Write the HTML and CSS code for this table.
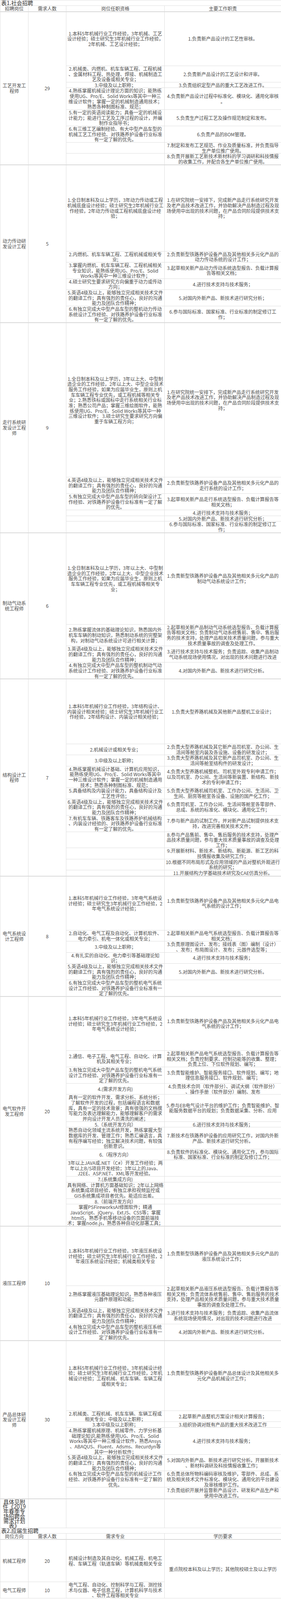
FILE: index.html
```html
<!DOCTYPE html>
<html lang="zh-CN">
<head>
<meta charset="utf-8">
<title>招聘需求</title>
<link rel="stylesheet" href="styles.css">
</head>
<body>
<table class="recruit">
<colgroup><col class="c1"><col class="c2"><col class="c3"><col class="c4"></colgroup>
<tbody>
<tr><td class="caption" colspan="4">表1.社会招聘</td></tr>
<tr class="head"><th>招聘岗位</th><th>需求人数</th><th>岗位任职资格</th><th>主要工作职责</th></tr>
</tbody>

<tbody class="group">
<tr class="gs"><td rowspan="8">工艺开发工<br>程师</td><td rowspan="8">29</td><td class="h-192">1.本科5年机械行业工作经验，3年机械、工艺<br>设计经验；硕士研究生3年机械行业工作经验，<br>2年机械、工艺设计经验；</td><td>1.负责新产品设计的工艺性审核。</td></tr>
<tr><td>2.机械类、内燃机、机车车辆工程、工程机械<br>、金属材料工程、热处理、焊接、机械制造工<br>艺及设备或相关专业；</td><td>2.负责新产品设计的工艺设计和评审。</td></tr>
<tr><td>3.中级及以上职称；</td><td>3.负责组织定型产品的重大工艺改进工作。</td></tr>
<tr><td>4.熟练掌握机械设计理论方面的知识；能熟练<br>使用UG、Pro/E、Solid Works等其中一种三<br>维设计软件；掌握一定的机械制造通用技术；<br>熟悉各种制图标准、规范；</td><td>4.负责新产品设计过程中标准化、模块化、通用化审核<br>。</td></tr>
<tr><td>5.有一定的英语阅读能力；具备一定的机械设<br>计能力；能进行工艺及工序过程的设计，并编<br>制作业指导书；</td><td>5.负责生产过程工艺及操作规范制定和发布。</td></tr>
<tr><td>6.有三维工艺编制经验、有大中型产品车型的<br>机械工艺工作经验、对铁路养护设备行业标准<br>有一定了解的优先。</td><td>6.负责产品的BOM管理。</td></tr>
<tr><td></td><td>7.制定和发布工艺规范、作业及质量标准，并负责指导<br>生产单位推广使用。</td></tr>
<tr><td></td><td>8.负责开展新工艺新技术新材料的学习调研和科技情报<br>的收集工作，并配合各生产单位推广使用。</td></tr>
</tbody>

<tbody class="group">
<tr class="gs"><td rowspan="6">动力传动研<br>发设计工程</td><td rowspan="6">5</td><td class="h-306">1.全日制本科及以上学历，3年动力传动或工程<br>机械底盘设计经验；硕士研究生2年机械行业工<br>作经验，2年动力传动或工程机械底盘设计经<br>验；</td><td>1.在研究院统一安排下，完成新产品走行系统研究开发<br>及老产品技术改进工作，并协助解决产品制造过程及现<br>场使用中出现的技术问题，在产品合同阶段提供技术支<br>持；</td></tr>
<tr><td>2.内燃机、机车车辆工程、工程机械或相关专<br>业;</td><td>2.负责新型铁路养护设备产品及其他相关多元化产品的<br>动力传动系统的设计工作；</td></tr>
<tr><td>3.掌握内燃机、机车车辆工程、工程机械相关<br>专业知识，能熟练使用UG、Pro/E、Solid<br>Works等其中一种三维设计软件；</td><td>3.起草相关新产品动力传动系统选型报告、负载计算报<br>告等相关文档；</td></tr>
<tr><td>4.硕士研究生要求研究方向偏重于动力或传动<br>方向；</td><td>4.进行技术支持与技术服务；</td></tr>
<tr><td>5.英语4级及以上，能够独立完成相关技术文件<br>的翻译工作；具有强烈的责任心，良好的沟通<br>能力及团队合作精神；</td><td>5.对国内外新产品、新技术进行研究分析；</td></tr>
<tr><td>6.有独立完成大中型产品车型的整机动力传动<br>系统设计工作经验、对铁路养护设备行业标准<br>有一定了解的优先。</td><td>6.参与国际标准、国家标准、行业标准的制定修订工<br>作；</td></tr>
</tbody>

<tbody class="group">
<tr class="gs"><td rowspan="6">走行系统研<br>发设计工程<br>师</td><td rowspan="6">9</td><td class="h-546">1.全日制本科及以上学历，3年以上大、中型制<br>造企业的工作经验，2年以上大、中型企业技术<br>服务工作经验，如果为应届毕业生，原则上机<br>车车辆工程专业优先，或工程机械等相关专<br>业；2.熟悉铁标或国标中走行系统相关行业标<br>准；熟悉公司产品；掌握三维绘图软件，能熟<br>练使用UG、Pro/E、Solid Works等其中一种<br>三维设计软件； 3.硕士研究生要求研究方向偏<br>重于车辆工程方向；</td><td>1.在研究院统一安排下，完成新产品走行系统研究开发<br>及老产品技术改进工作，并协助解决产品制造过程及现<br>场使用中出现的技术问题，在产品合同阶段提供技术支<br>持；</td></tr>
<tr><td>4.英语4级及以上，能够独立完成相关技术文件<br>的翻译工作；具有强烈的责任心，良好的沟通<br>能力及团队合作精神；</td><td>2.负责新型铁路养护设备产品及其他相关多元化产品的<br>走行系统的设计工作；</td></tr>
<tr><td>5.有独立完成大中型产品车型的转向架设计工<br>作经验、对铁路养护设备行业标准有一定了解<br>的优先。</td><td>3.起草相关新产品走行系统选型报告、负载计算报告等<br>相关文档；</td></tr>
<tr><td></td><td>4.进行技术支持与技术服务；</td></tr>
<tr><td></td><td>5.对国内外新产品、新技术进行研究分析；</td></tr>
<tr><td></td><td>6.参与国际标准、国家标准、行业标准的制定修订工<br>作；</td></tr>
</tbody>

<tbody class="group">
<tr class="gs"><td rowspan="4">制动气动系<br>统工程师</td><td rowspan="4">6</td><td class="h-324">1.全日制本科及以上学历，3年以上大、中型制<br>造企业的工作经验，2年以上大、中型企业技术<br>服务工作经验，如果为应届毕业生，原则上机<br>车车辆工程专业优先，或工程机械等相关专<br>业；</td><td>1.负责新型铁路养护设备产品及其他相关多元化产品的<br>制动气动系统设计工作；</td></tr>
<tr><td>2.熟练掌握流体的基础理论知识，熟悉国内外<br>机车车辆的制动知识，熟悉制动系统的完整架<br>构，对制动气动系统设计可进行相关计算；</td><td>2.起草相关新产品制动气动系统选型报告、负载计算报<br>告等相关文档；负责制动气动系统售前、售中、售后服<br>务的技术支持，处理产品相关技术质量问题，参与重大<br>技术质量事故的调查及处理工作。</td></tr>
<tr><td>3.英语4级及以上，能够独立完成相关技术文件<br>的翻译工作；具有强烈的责任心，良好的沟通<br>能力及团队合作精神；</td><td>3.进行技术支持与技术服务；负责追踪、收集产品制动<br>气动系统现场使用情况，对出现的技术问题进行改进</td></tr>
<tr><td>4.有独立完成大中型产品车型的整机制动气动<br>系统设计工作经验、对铁路养护设备行业标准<br>有一定了解的优先。</td><td>4.对国内外新产品、新技术进行研究分析。</td></tr>
</tbody>

<tbody class="group">
<tr class="gs"><td rowspan="11">结构设计工<br>程师</td><td rowspan="11">7</td><td class="h-230">1.本科5年机械行业工作经验，3年结构设计、<br>内装设计相关经验；硕士研究生3年机械行业工<br>作经验，2年结构设计、内装设计相关经验；</td><td>1.负责大型养路机械及其他新产品整机工业设计；</td></tr>
<tr><td>2.机械设计或相关专业；</td><td>2.负责大型养路机械及其它新产品司机室、办公间、生<br>活间等舱室内装及各设施、设备的研发设计；</td></tr>
<tr><td>3.中级及以上职称；</td><td>3.负责大型养路机械及其它新产品司机室、办公间、生<br>活间等舱室结构件的研发设计；</td></tr>
<tr><td>4.熟练掌握机械设计基础、计算机应用知识，<br>能熟练使用UG、Pro/E、Solid Works等其中<br>一种三维设计软件；掌握一定的机械制造通用<br>技术；熟悉各种制图标准、规范；</td><td>4.负责大型养路机械整机、司机室外观专利申请工作；<br>以及司机室、办公间、生活间等新装置、新结构、新技<br>术的专利申请工作；</td></tr>
<tr><td>5.具备结构及内装设计能力，具备结构设计及<br>工艺性评估；</td><td>5.负责大型养路机械司机室、工作办公间、生活间、卫<br>生间、厨房等舱室各设备、设施的国产化工作；</td></tr>
<tr><td>6.英语4级及以上，能够独立完成相关技术文件<br>的翻译工作；具有强烈的责任心，良好的沟通<br>能力及团队合作精神；</td><td>6.负责司机室、工作办公间、生活间等舱室各零部件、<br>总成、系统的标准化、模块化、通用化工作；</td></tr>
<tr><td>7.有机车车辆、铁路客车及铁路养护机械结构<br>、内装设计经验的、对铁路养护设备行业标准<br>有一定了解的优先。</td><td>7.参与新产品的试制工作，并对新产品试制提供技术支<br>持，改进完善相关技术文件；</td></tr>
<tr><td></td><td>8.参与产品售前、售中、售后服务的技术支持，处理产<br>品技术质量问题，参与重大技术质量事故的调查及处理<br>工作；</td></tr>
<tr><td></td><td>9.开展新材料、新技术、新结构、新能源、新工艺的科<br>技情报收集及研究工作；</td></tr>
<tr><td></td><td>10.根据不同布局形式及应用领域的产品对整机外观进行<br>系统的研究；</td></tr>
<tr><td></td><td>11.开展结构力学基础技术研究及CAE仿真分析。</td></tr>
</tbody>

<tbody class="group">
<tr class="gs"><td rowspan="6">电气系统设<br>计工程师</td><td rowspan="6">8</td><td class="h-192">1.本科5年机械行业工作经验，3年电气系统设<br>计经验；硕士研究生3年机械行业工作经验，2<br>年电气系统设计经验；</td><td>1.负责新型铁路养护设备产品及其他相关多元化产品电<br>气系统的设计工作；</td></tr>
<tr><td>2.自动化、电气工程及自动化、计算机软件、<br>电力牵引、机电一体化或相关专业；</td><td>2.起草相关新产品电气系统选型报告、负载计算报告等<br>相关文档；</td></tr>
<tr><td>3.中级及以上职称；</td><td>3.负责原理图设计、发布；接线表（图）编制（设计）<br>、发布；布局图设计、发布；元器件选型等；</td></tr>
<tr><td>4.有扎实的自动化、电力牵引等基础理论知<br>识；</td><td>4.进行技术支持与技术服务；</td></tr>
<tr><td>5.英语4级及以上，能够独立完成相关技术文件<br>的翻译工作；具有强烈的责任心，良好的沟通<br>能力及团队合作精神；</td><td>5.对国内外新产品、新技术进行研究分析。</td></tr>
<tr><td>6.有独立完成大中型产品车型的整机电气系统<br>设计工作经验、对铁路养护设备行业标准有一<br>定了解的优先。</td><td></td></tr>
</tbody>

<tbody class="group">
<tr class="gs"><td rowspan="13">电气软件开<br>发工程师</td><td rowspan="13">20</td><td class="h-192">1.本科5年机械行业工作经验，3年电气系统设<br>计经验；硕士研究生3年机械行业工作经验，2<br>年电气系统设计经验；</td><td>1.负责新型铁路养护设备产品及其他相关多元化产品电<br>气系统的设计工作；</td></tr>
<tr><td>2.通信、电子工程、电气工程、自动化、计算<br>机及其相关专业；</td><td>2.起草相关新产品电气系统选型报告、负载计算报告等<br>相关文档；负责控制要求、控制功能等的收集、整理；<br>负责上位、下位软件规划、编写；</td></tr>
<tr><td>3.有独立完成大中型产品车型的整机电气系统<br>设计工作经验、对铁路养护设备行业标准有一<br>定了解的优先。</td><td>3.负责智能维护、智能服务接口、软件规划、编写；地<br>理信息服务接口、软件规划、编写；</td></tr>
<tr><td>4.(需求开发方向)</td><td>4.负责技术合同（软件部分）、调试大纲（软件部分）<br>、操作手册（软件部分）编制、发布</td></tr>
<tr><td>具有一定的软件开发、需求分析、系统分析；<br>了解软件开发的过程，包括编程语言和数据<br>库，具有一定的技术背景；具有很强的文档撰<br>写能力及表达理解能力，能够理解客户的需求<br>并向设计开发人员清洗的阐述；</td><td>5.参与EB电气设计平台的维护工作；负责智能维护、智<br>能服务数据平台的规划；负责数据采集、分析、应用</td></tr>
<tr><td>5.（系统开发方向）</td><td>6.进行技术支持与技术服务；</td></tr>
<tr><td>熟悉自动化领域主流系统开发，熟练掌握大型<br>数据库的开发、管理工作；熟悉汇编语言，具<br>有程序编写经验；独立解决技术问题，有较强<br>创新意识。</td><td>7.新技术在铁路养护设备的应用研究工作，对国内外新<br>产品、新技术进行研究分析。</td></tr>
<tr><td>6.（程序方向）</td><td>8.负责软件的标准化、模块化、通用化工作，参与国际<br>标准、国家标准、行业标准的制定及修订工作；</td></tr>
<tr><td>3年以上JAVA或.NET（C#）开发工作经验；两<br>年以上B/S项目开发经验；3年以上的Java、<br>J2EE、ASP.NET、XML等开发经验。</td><td></td></tr>
<tr><td>7.(系统集成方向)</td><td></td></tr>
<tr><td>具有网络、计算机方面基础知识；2年以上网络<br>系统集成项目经验，有独立承担视频监控或<br>GIS系统集成项目者优先。能适应出差。</td><td></td></tr>
<tr><td>8.（前端开发方向）</td><td></td></tr>
<tr><td>掌握PSFireworksAI修图软件；精通<br>JavaScript、jQuery、ExtJS、CSS等；掌握<br>html5，熟悉手机等移动设备的页面前端技<br>术；掌握node.js，熟悉各种自动化部署工具；</td><td></td></tr>
</tbody>

<tbody class="group">
<tr class="gs"><td rowspan="4">液压工程师</td><td rowspan="4">10</td><td class="h-211">1.本科5年机械行业工作经验，3年液压系统设<br>计经验；硕士研究生3年机械行业工作经验，2<br>年液压系统设计经验；机械类相关专业</td><td>1.负责新型铁路养护设备产品及其他相关多元化产品的<br>液压系统设计工作；</td></tr>
<tr><td>2.熟练掌握液压基础理论知识，熟悉各种液压<br>元器件原理和功能；</td><td>2.起草相关新产品液压系统选型报告、负载计算报告等<br>相关文档；负责流体系统售前、售中、售后服务的技术<br>支持，处理产品相关技术质量问题，参与重大技术质量<br>事故的调查及处理工作。</td></tr>
<tr><td>3.英语4级及以上，能够独立完成相关技术文件<br>的翻译工作；具有强烈的责任心，良好的沟通<br>能力及团队合作精神；</td><td>3.进行技术支持与技术服务；负责追踪、收集产品流体<br>系统现场使用情况，对出现的技术问题进行改进</td></tr>
<tr><td>4.有独立完成大中型产品车型的整机液压系统<br>设计工作经验、对铁路养护设备行业标准有一<br>定了解的优先。</td><td>4.对国内外新产品、新技术进行研究分析。</td></tr>
</tbody>

<tbody class="group">
<tr class="gs"><td rowspan="7">产品总体研<br>发设计工程<br>师</td><td rowspan="7">30</td><td class="h-249">1.本科5年机械行业工作经验，3年机械设计经<br>验；硕士研究生3年机械行业工作经验，2年机<br>械设计经验；工程机械、机车车辆、车辆工程<br>或相关专业；</td><td>1.负责新型铁路养护设备新产品总体设计及其他相关多<br>元化产品机械设计工作；</td></tr>
<tr><td>2.机械类、工程机械、机车车辆、车辆工程或<br>相关专业；中级及以上职称；</td><td>2.起草新产品整机方案设计相关计算报告；</td></tr>
<tr><td>3.本中级及以上职称；</td><td>3.组织协调对既有产品的重大技术改进工作</td></tr>
<tr><td>4.熟练掌握机械原理、机械零件、力学分析基<br>础理论知识,能熟练使用UG、Pro/E、Solid<br>Works等其中一种三维设计软件，熟悉Ansys<br>、ABAQUS、Fluent、Adsms、Recurdyn等<br>其中一种分析软件；</td><td>4.进行技术支持与技术服务；</td></tr>
<tr><td>5.英语4级及以上，能够独立完成相关技术文件<br>的翻译工作；具有强烈的责任心，良好的沟通<br>能力及团队合作精神；</td><td>5.对国内外新产品、新技术进行研究分析。开展新技术<br>、新材料调研及科技情报收集工作；</td></tr>
<tr><td>6.有独立完成大中型产品车型的机械设计工作<br>经验、对铁路养护设备行业标准有一定了解的<br>优先。</td><td>6.负责总体所物料编码审核及维护，零部件、总成、系<br>统及相关技术文件标准化、模块化、通用化的平台建设<br>及审核维护工作。</td></tr>
<tr><td></td><td>7.负责组织开展并监督新产品设计、研发和产品生产和<br>使用中改进工作。</td></tr>
</tbody>

<tbody>
<tr class="gs"><td class="note-cell">具体见附<br>件《2019<br>年春季专<br>场招聘会<br>需求计划<br>表》</td><td></td><td></td><td></td></tr>
<tr><td class="caption" colspan="4">表2.应届生招聘</td></tr>
<tr class="head"><th>岗位方向</th><th>需求人数</th><th>需求专业</th><th>学历要求</th></tr>
</tbody>

<tbody class="group">
<tr class="gs"><td>机械工程师</td><td>20</td><td class="h-154">机械设计制造及其自动化、机械工程、机电工<br>程、车辆工程（轨道车辆）等机械类相关专业</td><td rowspan="2">重点院校本科及以上学历；其他院校硕士及以上学历</td></tr>
<tr><td>电气工程师</td><td>10</td><td>电气工程、自动化、控制科学与工程、测控技<br>术与仪器、电子信息工程，计算机科学与技术<br>、软件工程等相关专业</td></tr>
</tbody>
</table>
</body>
</html>
```

FILE: styles.css
```css
html, body {
  margin: 0;
  padding: 0;
  background: #ffffff;
}

.recruit {
  width: 720px;
  border-collapse: collapse;
  table-layout: fixed;
  font-family: "Noto Sans CJK SC", "Microsoft YaHei", "Liberation Sans", sans-serif;
  font-size: 12px;
  line-height: 13.65px;
  color: #4d4d4d;
}

.c1 { width: 72px; }
.c2 { width: 97px; }
.c3 { width: 252px; }
.c4 { width: 299px; }

.recruit td,
.recruit th {
  border: 1px solid #dfdfdf;
  padding: 0 1px;
  text-align: center;
  vertical-align: middle;
  white-space: nowrap;
  font-weight: normal;
}

.recruit .caption {
  text-align: left;
  font-size: 14px;
  line-height: 13px;
  color: #2e2e2e;
  padding: 0 2px;
}

.recruit .head th {
  color: #4d4d4d;
  border-bottom: 2px solid #d9d9d9;
}

.recruit .gs > td {
  border-top: 2px solid #d9d9d9;
}

.recruit .note-cell {
  font-size: 14px;
  line-height: 12.3px;
  color: #333333;
}

.h-154 { height: 107px; }
.h-192 { height: 137.2px; }
.h-211 { height: 151px; }
.h-230 { height: 164.8px; }
.h-249 { height: 178.6px; }
.h-306 { height: 219.9px; }
.h-324 { height: 233px; }
.h-546 { height: 394px; }
```
